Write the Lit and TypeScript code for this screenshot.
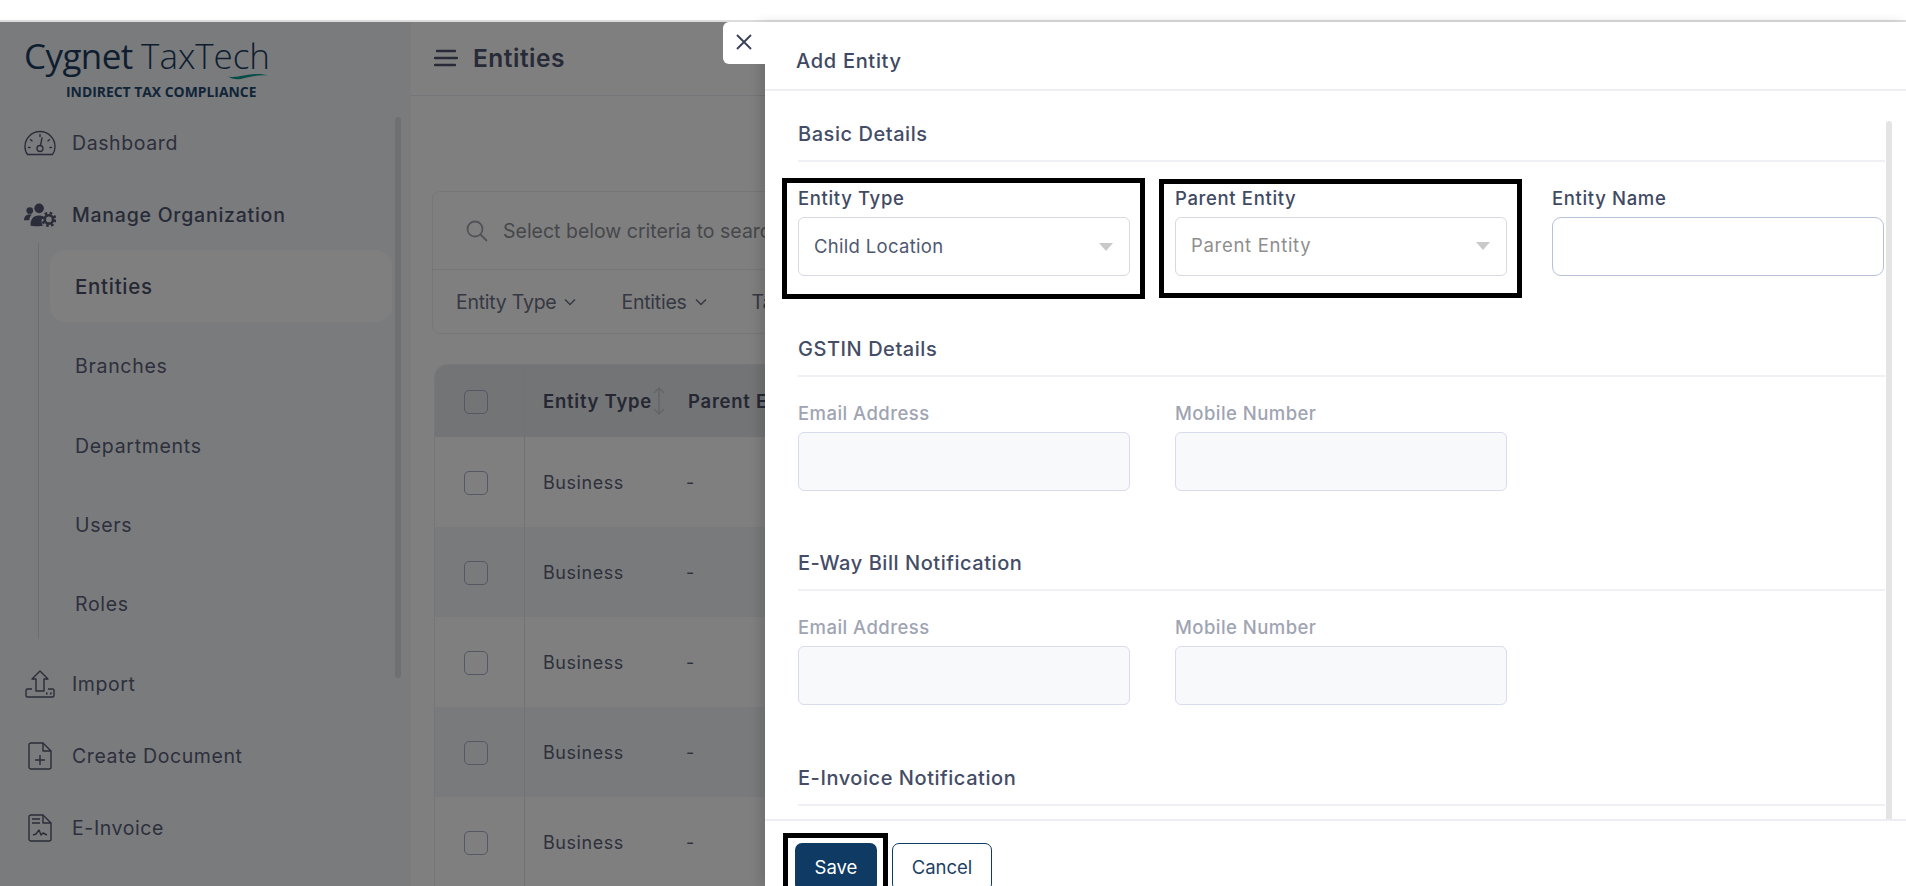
import { LitElement, html, css } from "lit";
import { customElement } from "lit/decorators.js";

const gauge = html`<svg class="ic" width="32" height="26" viewBox="0 0 32 26" fill="none" stroke="currentColor" stroke-width="1.400" stroke-linecap="round"><path d="M3.500 24.500C1.800 22.500 1 19.500 1 16.500A15 15 0 0 1 31 16.500C31 19.500 30.200 22.500 28.500 24.500Z"/><circle cx="16" cy="18.500" r="3"/><path d="M16.500 15.500L18 8M16 4.500V6.500M6.500 9.500L8 11M25.500 9.500L24 11M4.500 17.500H6M26 17.500H27.500"/></svg>`;
const people = html`<svg class="ic" width="36" height="26" viewBox="0 0 36 26" fill="currentColor"><circle cx="6.500" cy="8" r="3.800"/><circle cx="17" cy="5.500" r="5.400"/><path d="M0 19c0-4 2.500-6.500 5.500-6.500h3.500c-1.800 1.500-2.900 3.500-3.100 6.500z"/><path d="M7.500 25c-.6-7 3-11.500 9-11.500 2.200 0 4 .4 5.500 1.300-2.200 2.200-2.800 5.300-1.900 8 .3.900.8 1.700 1.500 2.400-1.600.4-3.100.5-4.600.5-3.200 0-6.500-.2-9.500-.7z"/><circle cx="28" cy="18" r="4.700" fill="none" stroke="currentColor" stroke-width="3"/><circle cx="28" cy="18" r="7.200" fill="none" stroke="currentColor" stroke-width="2.800" stroke-dasharray="2.900 2.750"/></svg>`;
const upload = html`<svg class="ic" width="30" height="28" viewBox="0 0 30 28" fill="none" stroke="currentColor" stroke-width="1.400" stroke-linejoin="round"><path d="M15 1L7 9H11V21H19V9H23Z"/><path d="M7 19H2.500A1.500 1.500 0 0 0 1 20.500V25.500A1.500 1.500 0 0 0 2.500 27H27.500A1.500 1.500 0 0 0 29 25.500V20.500A1.500 1.500 0 0 0 27.500 19H23"/><path d="M21 23.500h1.600M25 23.500h1.600" stroke-width="1.800"/></svg>`;
const docPlus = html`<svg class="ic" width="24" height="28" viewBox="0 0 24 28" fill="none" stroke="currentColor" stroke-width="1.400" stroke-linejoin="round"><path d="M3 1H15L23 9V25A2 2 0 0 1 21 27H3A2 2 0 0 1 1 25V3A2 2 0 0 1 3 1Z"/><path d="M15 1V9H23M12 13V23M7 18H17"/></svg>`;
const docSign = html`<svg class="ic" width="24" height="28" viewBox="0 0 24 28" fill="none" stroke="currentColor" stroke-width="1.400" stroke-linejoin="round"><path d="M3 1H15L23 9V25A2 2 0 0 1 21 27H3A2 2 0 0 1 1 25V3A2 2 0 0 1 3 1Z"/><path d="M15 1V9H23M4 5H12M4 9H12M5 21L8 20L11 16L13 21L15 19L19 21"/></svg>`;
const chevron = html`<svg class="chev" width="12" height="8" viewBox="0 0 12 8" fill="none" stroke="currentColor" stroke-width="1.500"><path d="M1 1.500L6 6.500L11 1.500"/></svg>`;
const caret = html`<svg class="caret" width="14" height="8" viewBox="0 0 14 8"><path d="M0 0H14L7 8Z" fill="#c9c9c9"/></svg>`;

@customElement("app-root")
export class AppRoot extends LitElement {
  static styles = css`
    :host { display: block; position: relative; width: 1906px; height: 886px; overflow: hidden; background: #fff;
      font-family: Inter, "Noto Sans", Arial, sans-serif; color: #4c5370; }
    * { box-sizing: border-box; }
    .top { height: 22px; border-bottom: 2px solid #dcdcdc; background: #fff; }
    .page { display: flex; height: 864px; }
    .side { width: 411px; flex: none; background: #f5f7fb; position: relative; }
    .logo { height: 93px; padding: 14px 0 0 24px; position: relative; color: #1d3d5f; font-family: "Open Sans", sans-serif; }
    .brand { font-size: 35px; line-height: 40px; letter-spacing: -0.6px; white-space: nowrap; }
    .brand b { font-weight: 400; }
    .brand span { font-weight: 300; letter-spacing: -0.050px; }
    .tag { margin: 8px 0 0 42px; font-size: 13.900px; line-height: 16px; font-weight: 700; white-space: nowrap; color: #234a72; }
    .swoosh { position: absolute; left: 227px; top: 49px; }
    .nav { display: flex; flex-direction: column; gap: 16px; }
    .item { height: 56px; display: flex; align-items: center; font-size: 19.500px; letter-spacing: 0.600px; color: #5a6078; position: relative; padding-left: 72px; white-space: nowrap; }
    .item.strong { font-weight: 500; color: #4f5670; letter-spacing: 0.750px; }
    .icwrap { position: absolute; left: 24px; width: 32px; display: flex; justify-content: center; color: #545a72; }
    .sub { margin: -16px 0 1px 38px; border-left: 1px solid #d9dde4; padding: 7px 19px 0 11px; height: 396px; display: flex; flex-direction: column; gap: 7.250px; }
    .sub div { height: 72px; flex: none; display: flex; align-items: center; padding: 2px 0 0 25px; font-size: 19.500px; letter-spacing: 0.700px; color: #5a6078; border-radius: 16px; }
    .sub .on { background: #fff; font-weight: 500; color: #4a5068; font-size: 20.500px; padding-top: 0; }
    .thumb { position: absolute; left: 395px; top: 95px; width: 6px; height: 561px; border-radius: 4px; background: #dfe1e5; }
    .main { flex: 1; min-width: 0; background: #fff; }
    .head { height: 74px; border-bottom: 1px solid #e7ebf0; display: flex; align-items: center; padding: 0 0 2px 23px; gap: 15px; }
    .title { font-size: 24.500px; font-weight: 600; letter-spacing: 0.500px; color: #4f566e; }
    .card { margin: 95px 0 0 21px; width: 1400px; height: 143px; border: 1px solid #eaedf1; border-radius: 8px; }
    .search { height: 78px; border-bottom: 1px solid #eaedf1; display: flex; align-items: center; padding-left: 33px; gap: 15px; color: #8c8f96; font-size: 19.500px; }
    .filters { height: 63px; display: flex; align-items: center; padding: 0 0 0 23px; font-size: 19.500px; letter-spacing: -0.250px; color: #6c7186; gap: 45px; }
    .filters span { display: flex; align-items: center; gap: 8px; }
    .chev { flex: none; }
    .table { margin: 30px 0 0 23px; width: 1400px; border-radius: 14px 0 0 0; overflow: hidden; border-left: 1px solid #eaedf1; border-top: 1px solid #eaedf1; }
    .row { height: 90px; display: grid; grid-template-columns: 90px 163px 1fr; align-items: center; font-size: 18px; color: #5c6278; letter-spacing: 0.550px; }
    .row.h { height: 72px; background: #e4e8ec; font-weight: 600; color: #4a4f66; font-size: 18.500px; letter-spacing: 0.750px; }
    .row.alt { background: #f3f5f7; }
    .check { height: 100%; border-right: 1px solid #e2e5ea; display: flex; align-items: center; justify-content: center; padding: 2px 7px 0 0; }
    .row.h .check { padding-top: 1px; }
    .box { width: 24px; height: 24px; border: 1px solid #a8aec8; border-radius: 5px; background: transparent; }
    .cell { padding-left: 18px; white-space: nowrap; display: flex; align-items: center; }
    .cell.c2 { padding-left: 0; }
    .cell.dash { margin-left: -2px; }
    .sort { margin-left: 1px; color: #c4c8ce; }
    .scrim { position: absolute; left: 0; right: 0; top: 22px; bottom: 0; background: rgba(0, 0, 0, 0.5); }
    .drawer { position: absolute; left: 765px; right: 0; top: 22px; bottom: 0; background: #fff; display: flex; flex-direction: column; box-shadow: -6px 0 10px rgba(0,0,0,0.12); }
    .close { position: absolute; left: -42px; top: 0; width: 42px; height: 42px; background: #fff; border-radius: 6px 0 0 6px; display: flex; align-items: center; justify-content: center; padding-bottom: 2px; }
    .dh { height: 69px; flex: none; border-bottom: 2px solid #eceef1; display: flex; align-items: center; padding: 10px 0 0 31px; font-size: 20px; font-weight: 500; letter-spacing: 0.700px; color: #3e4862; }
    .db { flex: 1; min-height: 0; overflow: hidden; padding: 31px 21px 0 33px; position: relative; }
    .sec { height: 214.670px; }
    .st { height: 40px; border-bottom: 2px solid #eef0f3; font-size: 20px; font-weight: 500; line-height: 24px; letter-spacing: 0.550px; color: #444c66; white-space: nowrap; }
    .grid { display: grid; grid-template-columns: repeat(3, 332px); column-gap: 45px; padding-top: 24px; }
    .field { position: relative; }
    .lab { height: 24px; line-height: 24px; margin-bottom: 7px; font-size: 18.500px; font-weight: 500; letter-spacing: 0.650px; color: #414a63; white-space: nowrap; }
    .lab.off { color: #9fa4b3; letter-spacing: 0.450px; margin-bottom: 7px; }
    .ctl { height: 59px; border: 1px solid #d6d9de; border-radius: 6px; display: flex; align-items: center; justify-content: space-between; padding: 0 16px 1px 15px; font-size: 18.500px; letter-spacing: 0.300px; color: #4f5870; }
    .ctl.ph { color: #8e8e8e; padding-bottom: 3px; letter-spacing: 0.700px; }
    .ctl.off { background: #f8f9fb; border-color: #d8dcec; }
    .ctl.name { border-color: #b6c0d8; border-radius: 9px; }
    .caret { margin-top: 2px; }
    .mark { position: absolute; border: 5px solid #000; pointer-events: none; }
    .m1 { left: -16px; right: -15px; top: -8px; bottom: -23px; }
    .m2 { left: -16.500px; right: -15px; top: -7px; bottom: -22px; }
    .m3 { left: -12px; right: -11px; top: -10px; bottom: -10px; }
    .bar { position: absolute; left: 1121px; top: 30px; width: 6px; height: 700px; background: #e4e4e4; border-radius: 3px; }
    .df { height: 67px; flex: none; border-top: 2px solid #eceef1; padding: 22px 0 0 30px; display: flex; gap: 15px; align-items: flex-start; }
    .btn { position: relative; height: 48px; border-radius: 7px; display: flex; align-items: center; justify-content: center; font-size: 18.500px; flex: none; }
    .save { width: 82px; background: #0f3a63; color: #fff; }
    .cancel { width: 100px; border: 1px solid #0f3a63; color: #1c3f63; background: #fff; }
  `;

  private section(title: string, body: unknown) {
    return html`<div class="sec"><div class="st">${title}</div>${body}</div>`;
  }

  private contact() {
    return html`<div class="grid">
      <div class="field"><div class="lab off">Email Address</div><div class="ctl off"></div></div>
      <div class="field"><div class="lab off">Mobile Number</div><div class="ctl off"></div></div>
    </div>`;
  }

  render() {
    return html`
      <div class="top"></div>
      <div class="page">
        <aside class="side">
          <div class="logo">
            <div class="brand"><b>Cygnet</b> <span>TaxTech</span></div>
            <div class="tag">INDIRECT TAX COMPLIANCE</div>
            <svg class="swoosh" width="42" height="9" viewBox="0 0 42 9"><path d="M1 5.500C12 8 24 0 41 4.500C30 3.500 22 6 14 8C8 9 4 7.500 1 5.500Z" fill="#0f9b8e"/></svg>
          </div>
          <nav class="nav">
            <div class="item"><span class="icwrap">${gauge}</span>Dashboard</div>
            <div class="item strong"><span class="icwrap">${people}</span>Manage Organization</div>
            <div class="sub">
              <div class="on">Entities</div><div>Branches</div><div>Departments</div><div>Users</div><div>Roles</div>
            </div>
            <div class="item"><span class="icwrap">${upload}</span>Import</div>
            <div class="item"><span class="icwrap">${docPlus}</span>Create Document</div>
            <div class="item"><span class="icwrap">${docSign}</span>E-Invoice</div>
          </nav>
          <div class="thumb"></div>
        </aside>
        <main class="main">
          <div class="head">
            <svg width="24" height="18" viewBox="0 0 24 18" fill="none" stroke="#50566e" stroke-width="2.400" stroke-linecap="round"><path d="M3 2H21M1 9H23M1 16H21"/></svg>
            <div class="title">Entities</div>
          </div>
          <div class="card">
            <div class="search">
              <svg width="22" height="22" viewBox="0 0 22 22" fill="none" stroke="#a3a6ad" stroke-width="1.800"><circle cx="9" cy="9" r="7.500"/><path d="M14.500 14.500L21 21"/></svg>
              Select below criteria to search
            </div>
            <div class="filters">
              <span>Entity Type ${chevron}</span><span>Entities ${chevron}</span><span>Tax</span>
            </div>
          </div>
          <div class="table">
            <div class="row h">
              <div class="check"><div class="box"></div></div>
              <div class="cell">Entity Type<svg class="sort" width="12" height="28" viewBox="0 0 12 28" fill="none" stroke="currentColor" stroke-width="1.400"><path d="M1 6L6 1L11 6M6 1V27M1 22L6 27L11 22"/></svg></div>
              <div class="cell c2">Parent Entity</div>
            </div>
            ${[0, 1, 2, 3, 4].map(
              (i) => html`<div class="row ${i % 2 ? "alt" : ""}">
                <div class="check"><div class="box"></div></div>
                <div class="cell">Business</div>
                <div class="cell c2 dash">-</div>
              </div>`
            )}
          </div>
        </main>
      </div>
      <div class="scrim"></div>
      <div class="drawer">
        <div class="close"><svg width="16" height="16" viewBox="0 0 16 16" fill="none" stroke="#3b4257" stroke-width="1.900"><path d="M1 1L15 15M15 1L1 15"/></svg></div>
        <div class="dh">Add Entity</div>
        <div class="db">
          ${this.section("Basic Details", html`<div class="grid">
            <div class="field"><div class="lab">Entity Type</div><div class="ctl">Child Location ${caret}</div><div class="mark m1"></div></div>
            <div class="field"><div class="lab">Parent Entity</div><div class="ctl ph">Parent Entity ${caret}</div><div class="mark m2"></div></div>
            <div class="field"><div class="lab">Entity Name</div><div class="ctl name"></div></div>
          </div>`)}
          ${this.section("GSTIN Details", this.contact())}
          ${this.section("E-Way Bill Notification", this.contact())}
          ${this.section("E-Invoice Notification", html``)}
          <div class="bar"></div>
        </div>
        <div class="df">
          <div class="btn save">Save<div class="mark m3"></div></div>
          <div class="btn cancel">Cancel</div>
        </div>
      </div>
    `;
  }
}
